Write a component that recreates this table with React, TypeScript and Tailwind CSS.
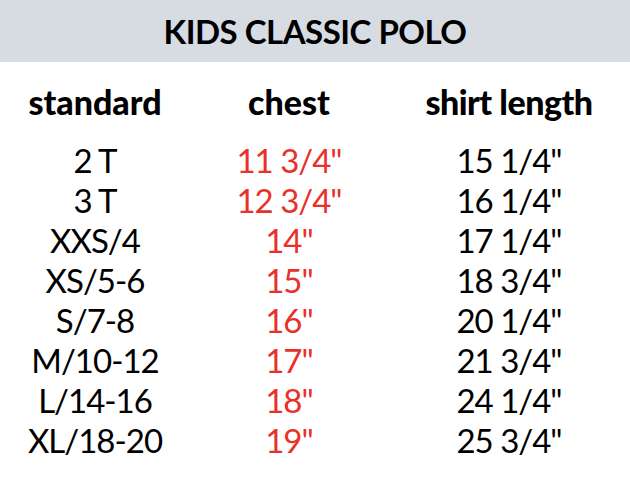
const rows: [string, string, string][] = [
  ['2 T', '11 3/4"', '15 1/4"'],
  ['3 T', '12 3/4"', '16 1/4"'],
  ['XXS/4', '14"', '17 1/4"'],
  ['XS/5-6', '15"', '18 3/4"'],
  ['S/7-8', '16"', '20 1/4"'],
  ['M/10-12', '17"', '21 3/4"'],
  ['L/14-16', '18"', '24 1/4"'],
  ['XL/18-20', '19"', '25 3/4"'],
];

export default function App() {
  return (
    <div className="w-[630px] h-[490px] bg-white font-['Lato',sans-serif] text-black">
      <div className="h-[62px] bg-[#d7dbe2] flex items-center justify-center">
        <h1 className="text-[33px] font-bold tracking-[-0.5px] leading-none">KIDS CLASSIC POLO</h1>
      </div>

      <div className="grid grid-cols-[190px_198px_1fr]">
        <div className="h-[78px] flex items-center justify-center text-[34px] font-black">standard</div>
        <div className="h-[78px] flex items-center justify-center text-[34px] font-black">chest</div>
        <div className="h-[78px] flex items-center justify-center text-[34px] font-black tracking-[-0.5px]">shirt length</div>

        {rows.map(([size, chest, length]) => (
          <div key={size} className="contents">
            <div className="h-[40px] pt-[2px] flex items-center justify-center text-[33px] font-normal tracking-[-1px]">{size}</div>
            <div className="h-[40px] pt-[2px] flex items-center justify-center text-[33px] font-normal tracking-[-1px] text-[#e8312a]">{chest}</div>
            <div className="h-[40px] pt-[2px] flex items-center justify-center text-[33px] font-normal tracking-[-1px]">{length}</div>
          </div>
        ))}
      </div>
    </div>
  );
}
